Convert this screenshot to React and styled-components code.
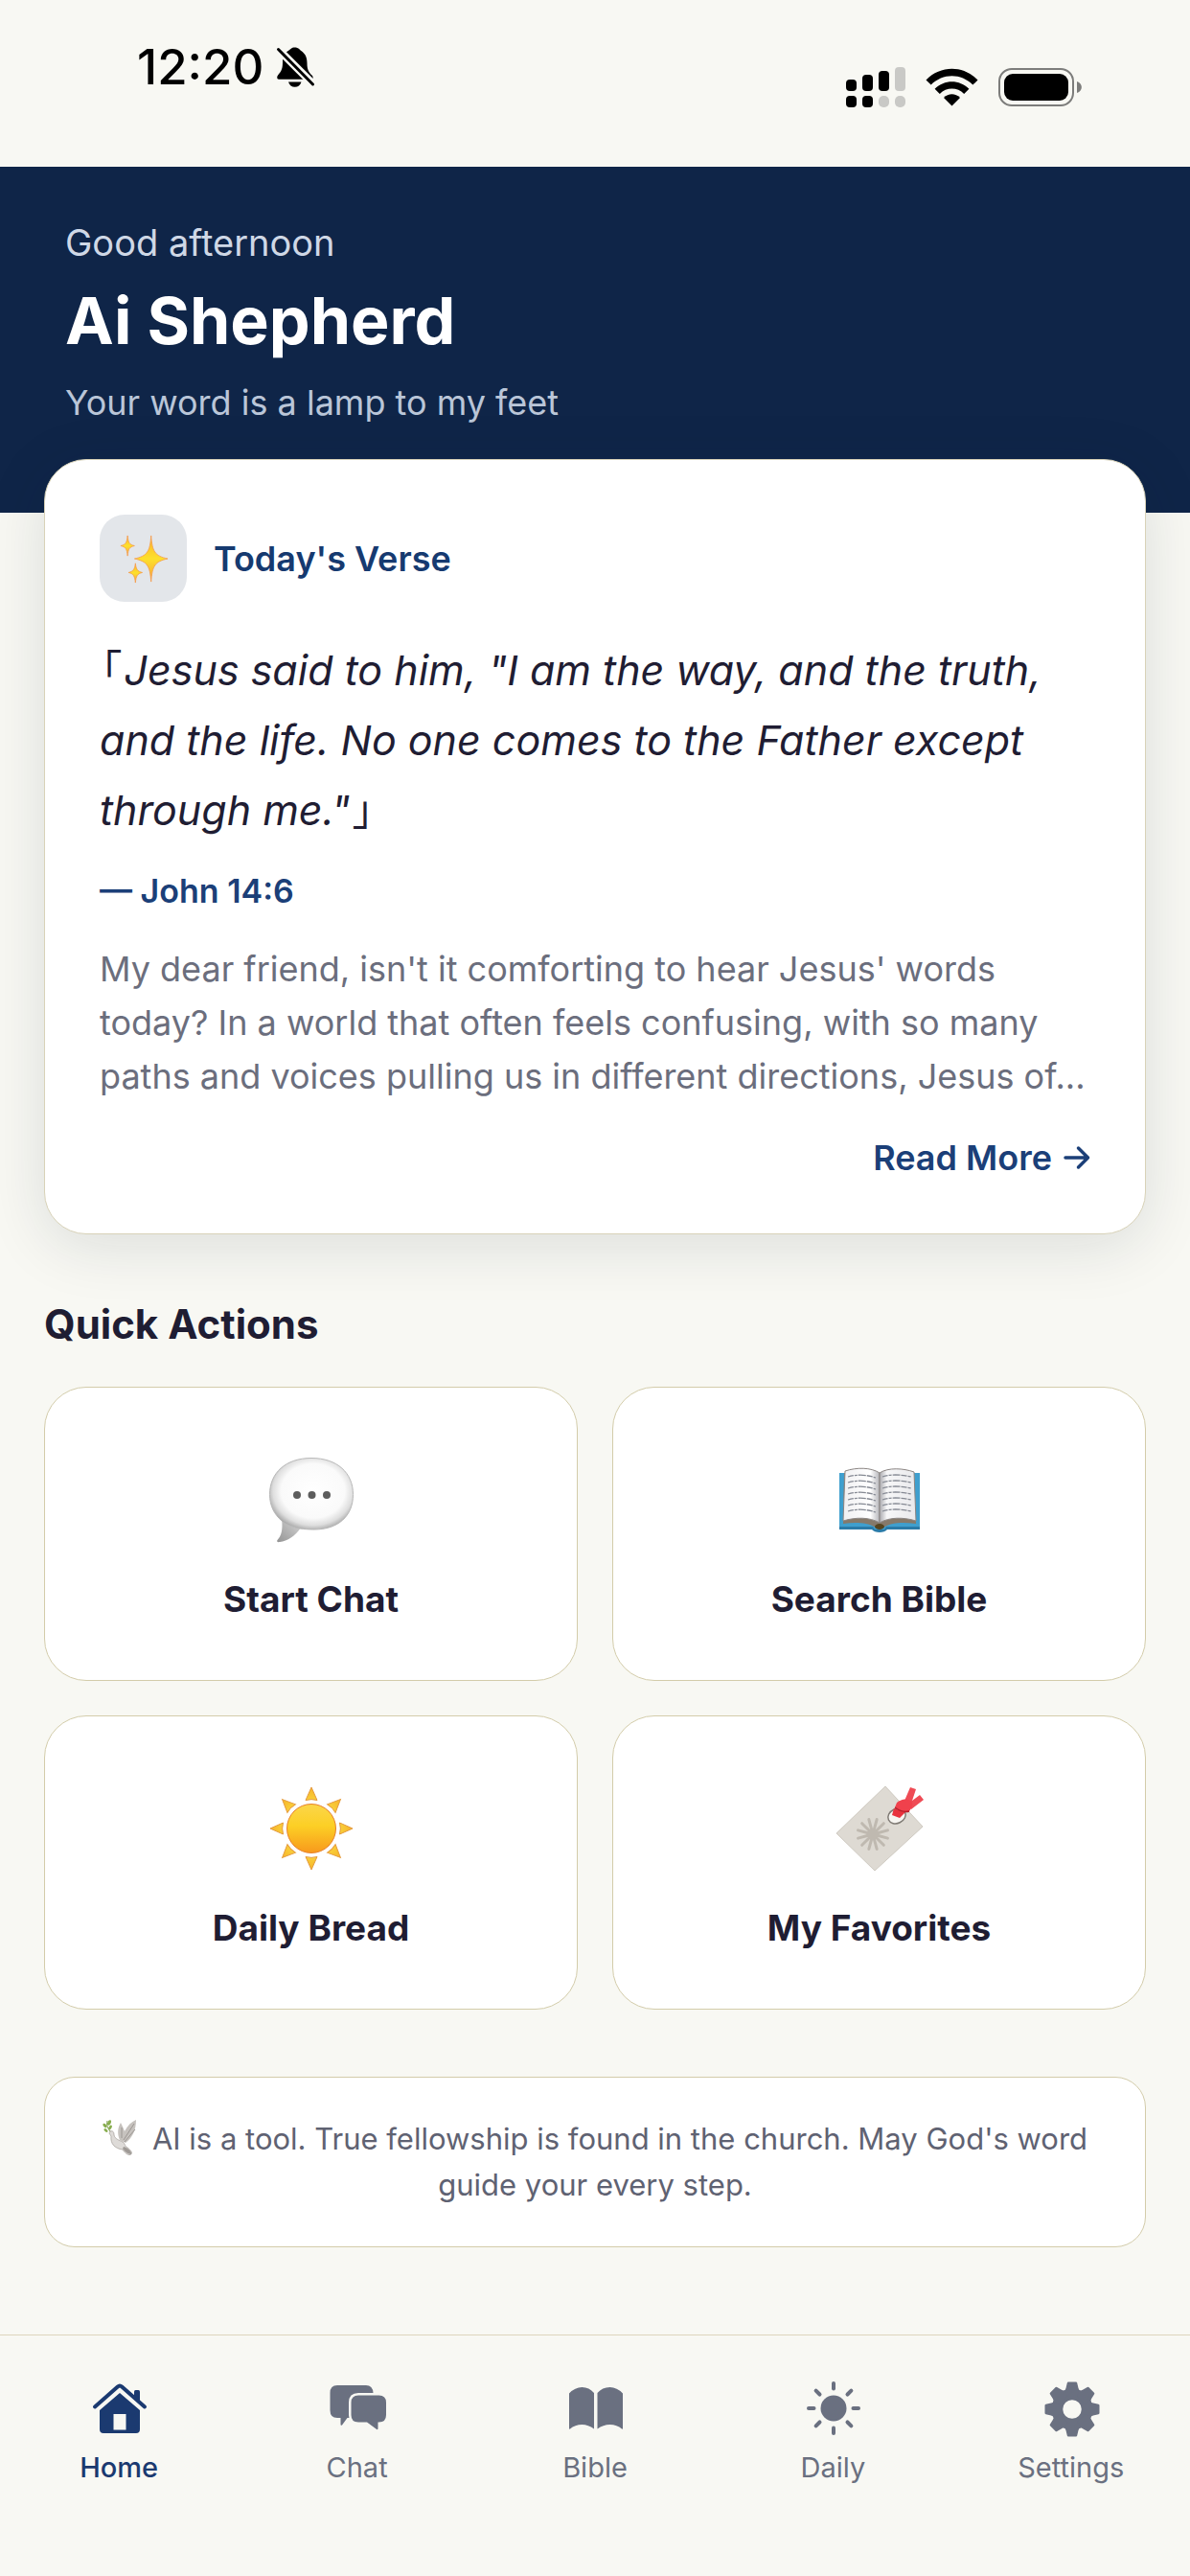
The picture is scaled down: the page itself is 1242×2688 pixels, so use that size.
import { styled, createGlobalStyle } from "styled-components";

const GlobalStyle = createGlobalStyle`
  * {
    box-sizing: border-box;
  }
  body {
    margin: 0;
    background: #f8f8f3;
    color: #1f1d33;
    font-family: Inter, "Noto Sans CJK JP", "Liberation Sans", sans-serif;
  }
  h1, h2, p {
    margin: 0;
  }
  svg {
    display: block;
    flex: none;
  }
`;

const Page = styled.div`
  display: flex;
  flex-direction: column;
  min-height: 100vh;
`;

const StatusBar = styled.div`
  display: flex;
  justify-content: space-between;
  height: 174px;
  padding: 40px 112px 0 143px;
  color: #000;
`;

const Clock = styled.div`
  display: flex;
  align-items: center;
  gap: 12px;
  height: 60px;
  font-size: 51px;
  line-height: 60px;
  font-weight: 500;
`;

const StatusIcons = styled.div`
  display: flex;
  align-items: center;
  gap: 21px;
  height: 42px;
  margin-top: 30px;
`;

const Header = styled.header`
  padding: 55px 68px 93px;
  background: #0f2548;
  color: #fff;
`;

const Greeting = styled.p`
  font-size: 38px;
  line-height: 48px;
  color: #cfd8e6;
`;

const Title = styled.h1`
  margin: 15px 0 22px;
  font-size: 68px;
  line-height: 84px;
  font-weight: 700;
`;

const Tagline = styled.p`
  font-size: 36px;
  line-height: 44px;
  color: #bac6d8;
`;

const Main = styled.main`
  flex: 1;
  padding: 0 46px;
`;

const VerseCard = styled.section`
  position: relative;
  margin-top: -56px;
  padding: 57px;
  border: 1px solid #d8d2b8;
  border-radius: 44px;
  background: #fff;
  box-shadow: 0 12px 64px rgba(20, 30, 50, 0.12);
`;

const CardHead = styled.div`
  display: flex;
  align-items: center;
  gap: 28px;
`;

const IconTile = styled.div`
  display: flex;
  align-items: center;
  justify-content: center;
  width: 91px;
  height: 91px;
  border-radius: 26px;
  background: #e3e6ea;
`;

const CardTitle = styled.h2`
  font-size: 36px;
  line-height: 44px;
  font-weight: 600;
  color: #163a70;
`;

const Verse = styled.p`
  margin-top: 35px;
  font-size: 43px;
  line-height: 73px;
  font-style: italic;
`;

const Bracket = styled.span`
  display: inline-block;
  padding: 0 2px;
  font-style: normal;
  font-feature-settings: "halt";
`;

const VerseRef = styled.p`
  margin-top: 26px;
  font-size: 34px;
  line-height: 44px;
  font-weight: 600;
  color: #1b3f78;
`;

const Reflection = styled.p`
  margin-top: 31px;
  font-size: 36px;
  line-height: 56px;
  color: #6b6e7d;
`;

const ReadMore = styled.a`
  display: flex;
  align-items: center;
  justify-content: flex-end;
  gap: 12px;
  margin-top: 35px;
  font-size: 36px;
  line-height: 44px;
  font-weight: 600;
  color: #1b3f78;
  text-decoration: none;
`;

const SectionTitle = styled.h2`
  margin: 67px 0 38px;
  font-size: 42px;
  line-height: 54px;
  font-weight: 700;
`;

const ActionGrid = styled.div`
  display: grid;
  grid-template-columns: 1fr 1fr;
  gap: 36px;
`;

const ActionButton = styled.button`
  display: flex;
  flex-direction: column;
  align-items: center;
  gap: 37px;
  padding: 72px 20px 62px;
  border: 1px solid #d3ccaa;
  border-radius: 44px;
  background: #fff;
  color: inherit;
  font-family: inherit;
  font-size: 37px;
  line-height: 44px;
  font-weight: 700;
`;

const Note = styled.p`
  margin: 70px 0 60px;
  padding: 40px 56px;
  border: 1px solid #d3ccaa;
  border-radius: 32px;
  background: #fff;
  font-size: 31px;
  line-height: 48px;
  text-align: center;
  color: #5f6272;

  svg {
    display: inline-block;
    margin-right: 16px;
    vertical-align: -6px;
  }
`;

const TabBar = styled.nav`
  display: grid;
  grid-template-columns: repeat(5, 1fr);
  padding: 46px 0 95px;
  border-top: 1px solid #ddd5bd;
`;

const Tab = styled.a`
  display: flex;
  flex-direction: column;
  align-items: center;
  gap: 14px;
  font-size: 29px;
  line-height: 36px;
  font-weight: ${(p) => (p.$active ? 500 : 400)};
  color: ${(p) => (p.$active ? "#1b3a70" : "#6a7080")};
  text-decoration: none;
`;

const BellOff = () => (
  <svg width="42" height="44" viewBox="0 0 42 44">
    <path
      d="M20.7 1.5C24.5 1.5 25.5 3.8 27.3 5C32 8.5 33.5 12 33.5 18C33.5 25 35.5 27.5 38.5 30.5C40 32 40.3 34.7 38 34.7H4C1.6 34.7 2 31.5 3.4 30C7 26 8 23 8 17C8 11 10 7 14.2 4.8C16.2 3.5 17 1.5 20.7 1.5Z"
      fill="#000"
    />
    <path d="M14 37.5H27.5C26.5 41 24 42.8 20.7 42.8C17.5 42.8 15 41 14 37.5Z" fill="#000" />
    <path d="M1 1L41 41" stroke="#f8f8f3" strokeWidth="8" />
    <path d="M3.5 3.5L39.5 40" stroke="#000" strokeWidth="3" strokeLinecap="round" />
  </svg>
);

const Signal = () => (
  <svg width="62" height="42" viewBox="0 0 62 42">
    <g fill="#000">
      <rect x="0" y="13" width="11" height="12" rx="4" />
      <rect x="17" y="8" width="11" height="17" rx="4" />
      <rect x="34" y="4" width="11" height="21" rx="4" />
      <rect x="0" y="30" width="11" height="12" rx="4" />
      <rect x="17" y="30" width="11" height="12" rx="4" />
    </g>
    <g fill="#c9c9c6">
      <rect x="51" y="0" width="11" height="25" rx="4" />
      <rect x="34" y="30" width="11" height="12" rx="5" />
      <rect x="51" y="30" width="11" height="12" rx="5" />
    </g>
  </svg>
);

const Wifi = () => (
  <svg width="55" height="40" viewBox="0 0 55 40">
    <path d="M0.5 12.5C15.5 -3.2 39.5 -3.2 54.5 12.5L49.3 17.6C37.2 5.2 17.8 5.2 5.7 17.6Z" />
    <path d="M9.6 21.7C19.6 11.6 35.4 11.6 45.4 21.7L40.2 26.9C33.2 19.8 21.8 19.8 14.8 26.9Z" />
    <path d="M19 31C23.8 26.1 31.2 26.1 36 31L27.5 39.5Z" />
  </svg>
);

const Battery = () => (
  <svg width="88" height="40" viewBox="0 0 88 40">
    <rect x="1" y="1" width="77" height="38" rx="13" fill="none" stroke="#7d7d7b" strokeWidth="2" />
    <rect x="6" y="6" width="67" height="28" rx="9" />
    <path d="M82 14C88.5 16 88.5 24 82 26Z" fill="#7d7d7b" />
  </svg>
);

const Sparkles = () => (
  <svg width="52" height="52" viewBox="0 0 54 54">
    <defs>
      <linearGradient id="spark" x1="0" y1="0" x2="0" y2="1">
        <stop offset="0" stopColor="#fbb02d" />
        <stop offset="0.5" stopColor="#fde02c" />
        <stop offset="1" stopColor="#f7a23c" />
      </linearGradient>
    </defs>
    <g fill="url(#spark)" stroke="#f59a4a" strokeWidth="0.8" strokeLinejoin="round">
      <path d="M35 2C36.2 19 39 24 53 27C39 30 36.2 35 35 52C33.8 35 31 30 17 27C31 24 33.8 19 35 2Z" />
      <path d="M9.5 2C10.2 9.5 11.5 11.8 17 13C11.5 14.2 10.2 16.5 9.5 24C8.8 16.5 7.5 14.2 2 13C7.5 11.8 8.8 9.5 9.5 2Z" />
      <path d="M18 32C18.7 38 20 40.8 25.5 42C20 43.2 18.7 46 18 53C17.3 46 16 43.2 10.5 42C16 40.8 17.3 38 18 32Z" />
    </g>
  </svg>
);

const Arrow = () => (
  <svg width="28" height="28" viewBox="0 0 28 28" fill="none" stroke="#1b3f78" strokeWidth="3.5">
    <path d="M2 14H25.5M15.5 4L25.500 14L15.5 24" strokeLinecap="round" strokeLinejoin="round" />
  </svg>
);

const SpeechBalloon = () => (
  <svg width="90" height="90" viewBox="0 0 90 90">
    <defs>
      <radialGradient id="balloon" cx="0.52" cy="0.46" r="0.56">
        <stop offset="0" stopColor="#ffffff" />
        <stop offset="0.68" stopColor="#fafafa" />
        <stop offset="0.86" stopColor="#dedede" />
        <stop offset="1" stopColor="#a8a8a8" />
      </radialGradient>
      <linearGradient id="balloonTail" x1="1" y1="0" x2="0" y2="1">
        <stop offset="0" stopColor="#d6d6d6" />
        <stop offset="1" stopColor="#949494" />
      </linearGradient>
    </defs>
    <path d="M14 65C15.5 76 13.5 83 9.5 87C8.5 88.5 9.5 89.5 12 89C20 88 28 83 34 74Z" fill="url(#balloonTail)" />
    <path
      d="M45 1.5C72 1.5 88.5 17 88.5 39.5C88.5 62 73 76 48 76C42 76 37 75.5 33 75C27 73.5 18 71 14 67C6 60 1.5 51 1.5 39.5C1.5 17 18 1.5 45 1.5Z"
      fill="url(#balloon)"
      stroke="#b9b9b9"
    />
    <g fill="#5d5d5d">
      <circle cx="30" cy="40" r="4" />
      <circle cx="45.5" cy="40" r="4" />
      <circle cx="61" cy="40" r="4" />
    </g>
  </svg>
);

const OpenBook = () => (
  <svg width="90" height="90" viewBox="0 0 90 90">
    <defs>
      <linearGradient id="pageLeft" x1="0" y1="0" x2="1" y2="0">
        <stop offset="0" stopColor="#f0f0f2" />
        <stop offset="0.75" stopColor="#ffffff" />
        <stop offset="1" stopColor="#b5b5ba" />
      </linearGradient>
      <linearGradient id="pageRight" x1="0" y1="0" x2="1" y2="0">
        <stop offset="0" stopColor="#a9a9ae" />
        <stop offset="0.2" stopColor="#f7f7f8" />
        <stop offset="1" stopColor="#e9e9ec" />
      </linearGradient>
    </defs>
    <path d="M3 17H87V75H52C50 79 40 79 38 75H3Z" fill="#3f9fce" />
    <path d="M3 73H38L40 76H50L52 73H87V76H53C50 80 40 80 37 76H3Z" fill="#2a7ba8" />
    <path d="M8 17L81 17L83 70C69 68 57 69 51 73H39C33 69 20 68 7 70Z" fill="#85796a" />
    <path d="M9 15C21 11 36 11 45 17V69C35 63 20 63 7 67Z" fill="url(#pageLeft)" stroke="#8b8583" />
    <path d="M45 17C54 11 70 12 81 16L83 67C70 63 55 63 45 69Z" fill="url(#pageRight)" stroke="#8b8583" />
    <ellipse cx="45" cy="73" rx="5" ry="3" fill="#57451f" />
    <g stroke="#868a94" strokeWidth="1.3" strokeDasharray="6 1 3 1 8 1" fill="none">
      {[0, 1, 2, 3, 4, 5, 6].map((n) => (
        <path key={n} d={`M12 ${21 + n * 6}Q26 ${17 + n * 6} 41 ${22 + n * 6}M48 ${21 + n * 6}Q60 ${17 + n * 6} 78 ${21 + n * 6}`} />
      ))}
    </g>
  </svg>
);

const Sun = () => (
  <svg width="90" height="90" viewBox="0 0 90 90">
    <defs>
      <linearGradient id="sunDisc" x1="0" y1="0" x2="0" y2="1">
        <stop offset="0" stopColor="#fbd64a" />
        <stop offset="0.45" stopColor="#fccf25" />
        <stop offset="1" stopColor="#f8991c" />
      </linearGradient>
      <linearGradient id="sunRay" x1="0" y1="0" x2="0" y2="1">
        <stop offset="0" stopColor="#f6b429" />
        <stop offset="1" stopColor="#f9cf3a" />
      </linearGradient>
    </defs>
    {[0, 45, 90, 135, 180, 225, 270, 315].map((deg) => (
      <path key={deg} d="M45 2L51 15.5Q45 13.8 39 15.5Z" transform={`rotate(${deg} 45 45)`} fill="url(#sunRay)" stroke="#e59a3c" />
    ))}
    <circle cx="45" cy="45" r="25.5" fill="url(#sunDisc)" stroke="#e8812a" />
  </svg>
);

const FavoriteTag = () => (
  <svg width="94" height="90" viewBox="0 0 94 90">
    <path d="M53 1L92 43L42 89L2 50Z" fill="#dedad3" stroke="#cfcac1" />
    <ellipse cx="65" cy="32" rx="9.5" ry="7.5" transform="rotate(-25 65 32)" fill="#f7f5f1" stroke="#7e7973" strokeWidth="1.5" />
    <g stroke="#bfb9b0" strokeWidth="3" strokeLinecap="round">
      {[15, 45, 75, 105, 135, 165, 195, 225, 255, 285, 315, 345].map((deg) => (
        <path key={deg} d="M40 45V35" transform={`rotate(${deg} 40 51)`} />
      ))}
    </g>
    <circle cx="40" cy="51" r="6" fill="#bfb9b0" />
    <path d="M73 16L79 2L85 4L81 16L89 10L93 15L80 25Z" fill="#ef4b55" />
    <path d="M62 24L74 28L68 34L60 31Z" fill="#e8323d" />
    <path d="M65 18Q72 12 80 16Q83 21 78 27Q71 29 63 23Z" fill="#f0414c" />
    <path d="M63 23Q71 29 78 27" stroke="#b71f2a" strokeWidth="1.5" fill="none" />
  </svg>
);

const Dove = () => (
  <svg width="36" height="38" viewBox="0 0 36 38">
    <path d="M8 13C5 9 4 6 5 2" stroke="#7a9a4a" strokeWidth="1" fill="none" />
    <g fill="#87ad4e">
      <ellipse cx="7" cy="4" rx="1.7" ry="3" transform="rotate(25 7 4)" />
      <ellipse cx="2.5" cy="7" rx="1.5" ry="2.6" transform="rotate(-40 2.5 7)" />
      <ellipse cx="8" cy="9" rx="1.5" ry="2.6" transform="rotate(35 8 9)" />
      <ellipse cx="3.5" cy="12" rx="1.4" ry="2.4" transform="rotate(-50 3.5 12)" />
    </g>
    <path d="M18 22C15 15 16 9 19 4C21 8 22 10 23 13C26 7 30 3 35 1C35 12 31 20 24 25Z" fill="#c6c2be" />
    <path d="M20 20L20 9M22 22L33 5M23 24L34 11" stroke="#9b9692" strokeWidth="1" />
    <path d="M8 13C11 12 12 14 12 17C13 21 17 22 21 24C24 26 23 29 26 30C30 33 32 36 29 37.5C26 38 23 35 21 32C13 31 8 26 9 18L7 15Z" fill="#dedbd8" stroke="#aaa5a0" strokeWidth="0.8" />
    <path d="M22 29C26 30 31 34 30 37C27 37 23 34 21 31Z" fill="#9f9a96" />
  </svg>
);

const HomeIcon = () => (
  <svg width="60" height="60" viewBox="0 0 60 60" fill="currentColor">
    <path d="M46 12.5Q46 11 47.5 11H50.5Q52 11 52 12.5V26L46 20Z" />
    <path d="M5 28.5L28.8 7.5Q31 5.5 33.2 7.5L57 28.5" fill="none" stroke="currentColor" strokeWidth="4" strokeLinecap="round" />
    <path fillRule="evenodd" d="M31 14L52 32V52Q52 56 48 56H14Q10 56 10 52V32ZM24.5 36V52.5H37.5V36Z" />
  </svg>
);

const ChatIcon = () => (
  <svg width="60" height="60" viewBox="0 0 60 60" fill="currentColor">
    <path d="M9 6H39Q46 6 46.5 14V40H19.5L14 47.5Q12.5 48.5 12.5 46.5V40H9Q1.5 40 1.5 32V14Q1.5 6 9 6Z" />
    <path
      d="M31 16.5H52.5Q60 16.5 60 24V37Q60 44.5 52.5 44.5H51.5V51Q51.5 53 49.5 51.5L40 44.5H31Q23.5 44.5 23.5 37V24Q23.5 16.5 31 16.5Z"
      stroke="#f8f8f3"
      strokeWidth="5"
      paintOrder="stroke"
    />
  </svg>
);

const BibleIcon = () => (
  <svg width="60" height="60" viewBox="0 0 60 60" fill="currentColor">
    <path d="M3 14.5Q9 8 16.5 8Q24 8 29 14V51.5Q23 47 16.5 47Q9 47 4 51.5Q3 52 3 51Z" />
    <path d="M32.5 14Q37.5 8 45.5 8Q53 8 59 14.5V51Q59 52 58 51.5Q53 47 45.5 47Q38.5 47 32.5 51.5Z" />
  </svg>
);

const DailyIcon = () => (
  <svg width="60" height="60" viewBox="0 0 60 60" fill="currentColor">
    <circle cx="31" cy="30" r="13.5" />
    {[0, 45, 90, 135, 180, 225, 270, 315].map((deg) => (
      <path key={deg} d="M31 4V9.5" transform={`rotate(${deg} 31 30)`} stroke="currentColor" strokeWidth="4" strokeLinecap="round" />
    ))}
  </svg>
);

const SettingsIcon = () => (
  <svg width="60" height="60" viewBox="0 0 60 60" fill="currentColor">
    <circle cx="31" cy="31" r="15.5" fill="none" stroke="currentColor" strokeWidth="11.5" />
    {[0, 45, 90, 135, 180, 225, 270, 315].map((deg) => (
      <path
        key={deg}
        d="M27 2.5H35Q36 2.5 36.2 3.5L37.5 9Q38 11.5 40.5 12.5L36 18H26L21.5 12.5Q24 11.5 24.5 9L25.8 3.5Q26 2.5 27 2.5Z"
        transform={`rotate(${deg} 31 31)`}
      />
    ))}
  </svg>
);

const actions = [
  { label: "Start Chat", Icon: SpeechBalloon },
  { label: "Search Bible", Icon: OpenBook },
  { label: "Daily Bread", Icon: Sun },
  { label: "My Favorites", Icon: FavoriteTag },
];

const tabs = [
  { label: "Home", Icon: HomeIcon, active: true },
  { label: "Chat", Icon: ChatIcon },
  { label: "Bible", Icon: BibleIcon },
  { label: "Daily", Icon: DailyIcon },
  { label: "Settings", Icon: SettingsIcon },
];

const App = () => {
  return (
    <Page>
      <GlobalStyle />
      <StatusBar>
        <Clock>
          <span>12:20</span>
          <BellOff />
        </Clock>
        <StatusIcons>
          <Signal />
          <Wifi />
          <Battery />
        </StatusIcons>
      </StatusBar>
      <Header>
        <Greeting>Good afternoon</Greeting>
        <Title>Ai Shepherd</Title>
        <Tagline>Your word is a lamp to my feet</Tagline>
      </Header>
      <Main>
        <VerseCard>
          <CardHead>
            <IconTile>
              <Sparkles />
            </IconTile>
            <CardTitle>Today's Verse</CardTitle>
          </CardHead>
          <Verse>
            <Bracket>「</Bracket>Jesus said to him, "I am the way, and the truth, and the life. No one comes to the
            Father except through me."<Bracket>」</Bracket>
          </Verse>
          <VerseRef>— John 14:6</VerseRef>
          <Reflection>
            My dear friend, isn't it comforting to hear Jesus' words today? In a world that often feels confusing,
            with so many paths and voices pulling us in different directions, Jesus of...
          </Reflection>
          <ReadMore href="#">
            Read More
            <Arrow />
          </ReadMore>
        </VerseCard>
        <SectionTitle>Quick Actions</SectionTitle>
        <ActionGrid>
          {actions.map(({ label, Icon }) => (
            <ActionButton key={label} type="button">
              <Icon />
              {label}
            </ActionButton>
          ))}
        </ActionGrid>
        <Note>
          <Dove />
          AI is a tool. True fellowship is found in the church. May God's word guide your every step.
        </Note>
      </Main>
      <TabBar>
        {tabs.map(({ label, Icon, active }) => (
          <Tab key={label} href="#" $active={active} aria-current={active ? "page" : undefined}>
            <Icon />
            {label}
          </Tab>
        ))}
      </TabBar>
    </Page>
  );
};

export default App;
